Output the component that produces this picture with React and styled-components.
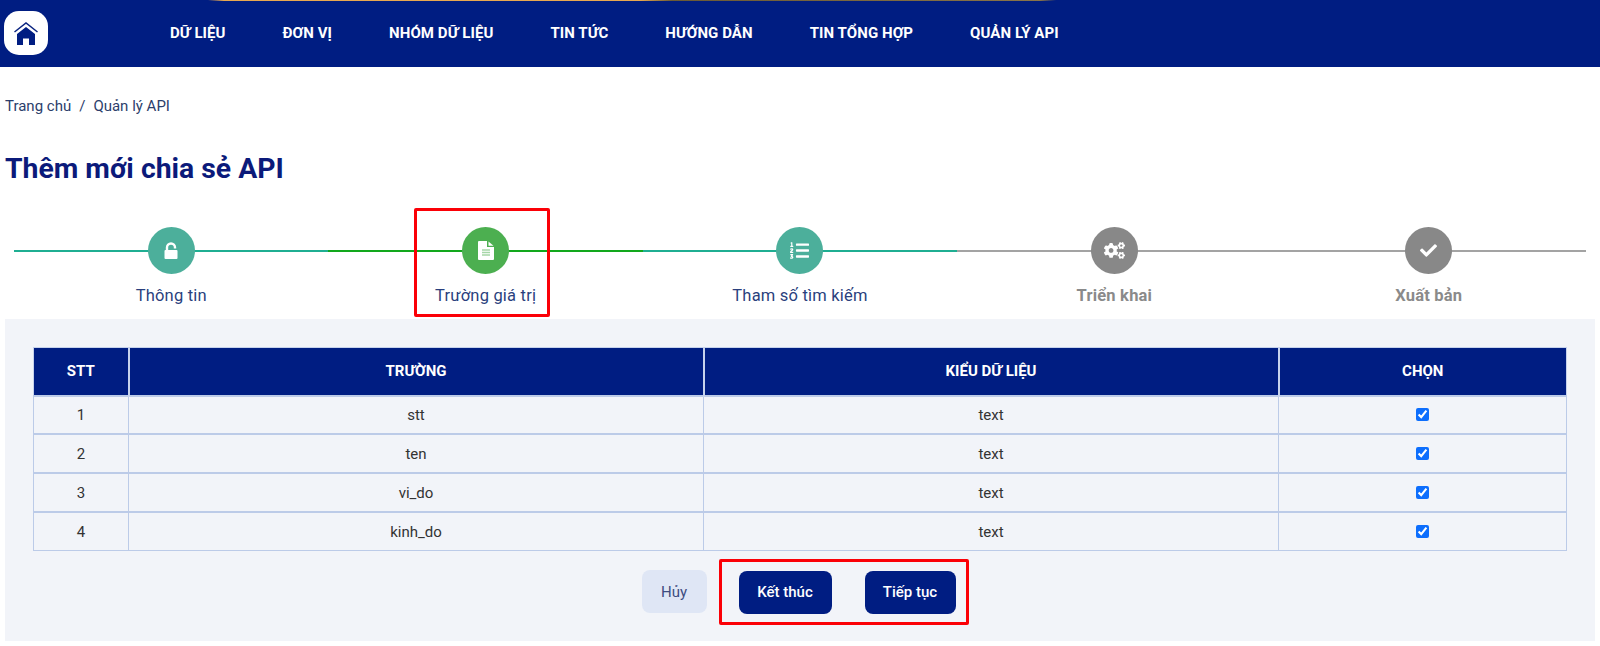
import React from "react";
import styled, { createGlobalStyle } from "styled-components";
import { FaListOl, FaCogs, FaCheck } from "react-icons/fa";

const Global = createGlobalStyle`
  html, body { margin: 0; padding: 0; background: #fff; }
  body { font-family: Roboto, "Liberation Sans", sans-serif; color: #333; overflow: hidden; }
  * { box-sizing: border-box; }
`;

const Page = styled.div`
  width: 1600px;
  height: 646px;
  overflow: hidden;
`;
const TopStrip = styled.div`
  height: 1px;
  background: linear-gradient(90deg, #001d82 0%, #001d82 13%, #e8a850 14%, #e8a850 40%, #6b5a35 42%, #8a7448 65%, #001d82 66%, #001d82 100%);
`;
const Nav = styled.nav`
  height: 66px;
  background: #001d82;
  display: flex;
  align-items: center;
  padding: 0 0 2px 4px;
`;
const LogoBox = styled.a`
  width: 44px;
  height: 44px;
  background: #fff;
  border-radius: 15px;
  display: flex;
  align-items: center;
  justify-content: center;
  margin-right: 122px;
`;
const NavList = styled.div`
  display: flex;
  gap: 57px;
`;
const NavItem = styled.a`
  color: #fff;
  font-size: 15px;
  font-weight: 700;
  letter-spacing: 0.08px;
  white-space: nowrap;
`;
const Breadcrumb = styled.div`
  display: flex;
  gap: 8px;
  padding: 31px 0 0 5px;
  font-size: 15px;
  line-height: 17px;
  color: #2c3e6b;
`;
const Title = styled.h1`
  margin: 37px 0 0 5px;
  font-size: 28.35px;
  line-height: 34px;
  font-weight: 700;
  color: #0b1a7a;
`;
const Stepper = styled.div`
  display: grid;
  grid-template-columns: repeat(5, 1fr);
  margin: 41px 14px 0;
  height: 92px;
`;
const Step = styled.div`
  position: relative;
  display: flex;
  flex-direction: column;
  align-items: center;
  &::before {
    content: "";
    position: absolute;
    left: 0;
    right: 0;
    top: 23px;
    height: 2px;
    background: ${(p) => p.$line};
  }
`;
const Circle = styled.div`
  position: relative;
  width: 47px;
  height: 47px;
  border-radius: 50%;
  background: ${(p) => p.$bg};
  color: #fff;
  display: flex;
  align-items: center;
  justify-content: center;
  font-size: ${(p) => p.$size || 17}px;
`;
const StepLabel = styled.div`
  margin-top: 11px;
  font-size: 16.5px;
  line-height: 22px;
  letter-spacing: 0.2px;
  font-weight: ${(p) => (p.$muted ? 700 : 400)};
  color: ${(p) => (p.$muted ? "#8a8a8a" : "#2a3f7d")};
  white-space: nowrap;
`;
const Highlight = styled.div`
  position: absolute;
  left: calc(50% - 3.5px);
  top: -19px;
  width: 136px;
  height: 109px;
  transform: translateX(-50%);
  border: 3px solid #fb0007;
  border-radius: 2px;
  pointer-events: none;
`;
const Panel = styled.section`
  margin: 0 5px;
  height: 322px;
  background: #f2f4f9;
  padding: 28px 29px 0 28px;
`;
const Table = styled.table`
  width: 1533px;
  table-layout: fixed;
  border-collapse: collapse;
  font-size: 15px;
`;
const Th = styled.th`
  height: 48px;
  background: #001d82;
  color: #fff;
  font-size: 15px;
  font-weight: 700;
  text-align: center;
  border: 1px solid #c6d2ec;
  border-left-width: 2px;
  border-right-width: 2px;
  &:first-child { border-left-width: 1px; }
  &:last-child { border-right-width: 1px; }
  width: ${(p) => p.$w}px;
`;
const Td = styled.td`
  height: 38.7px;
  text-align: center;
  color: #333;
  border: 1px solid #bccbe8;
  border-top-width: 2px;
  padding: 1px 0 0;
`;
const Check = styled.input`
  display: block;
  width: 13px;
  height: 13px;
  margin: -1px auto 0;
  accent-color: #0d6efd;
`;
const Actions = styled.div`
  display: flex;
  justify-content: center;
  align-items: center;
  gap: 12px;
  margin-top: 8px;
  padding-left: 11px;
`;
const Group = styled.div`
  display: flex;
  gap: 33px;
  padding: 9px 10px 8px 17px;
  border: 3px solid #fb0007;
  border-radius: 2px;
`;
const Button = styled.button`
  height: 43px;
  width: ${(p) => p.$w}px;
  border: none;
  border-radius: 8px;
  font-family: inherit;
  font-size: 15px;
  font-weight: ${(p) => (p.$ghost ? 400 : 500)};
  padding: 0;
  background: ${(p) => (p.$ghost ? "#dfe6f5" : "#001d82")};
  color: ${(p) => (p.$ghost ? "#3d4c80" : "#fff")};
`;

const HomeIcon = () => (
  <svg width="24" height="23" viewBox="0 0 24 23">
    <path d="M0.500 10 12 1l11.500 9" fill="none" stroke="#0b2480" strokeWidth="1.500" />
    <path d="M12 5 3 12v11h6v-6.500h6V23h6V12z" fill="#001d82" />
  </svg>
);
const UnlockIcon = () => (
  <svg width="14" height="17" viewBox="0 0 14 17">
    <path d="M3 9V5.500a4 4 0 0 1 8 0V6.500" fill="none" stroke="#fff" strokeWidth="2.400" />
    <rect x="0.500" y="8" width="13" height="9" rx="1" fill="#fff" />
  </svg>
);
const FileIcon = () => (
  <svg width="16" height="19" viewBox="0 0 16 19">
    <path d="M0 1a1 1 0 0 1 1-1h8v6h7v12a1 1 0 0 1-1 1H1a1 1 0 0 1-1-1z" fill="#fff" />
    <path d="M10.500 0.500 15.500 4.800H10.500z" fill="#fff" />
    <path d="M4 9h8M4 11.500h8M4 14h8" stroke="#a5d6a7" strokeWidth="1.300" />
  </svg>
);

const NAV = ["DỮ LIỆU", "ĐƠN VỊ", "NHÓM DỮ LIỆU", "TIN TỨC", "HƯỚNG DẪN", "TIN TỔNG HỢP", "QUẢN LÝ API"];
const STEPS = [
  { label: "Thông tin", Icon: UnlockIcon, bg: "#4caf9b", line: "#1fae92" },
  { label: "Trường giá trị", Icon: FileIcon, bg: "#4caf50", line: "#12a81c", boxed: true },
  { label: "Tham số tìm kiếm", Icon: FaListOl, bg: "#4caf9b", line: "#1fae92", size: 19 },
  { label: "Triển khai", Icon: FaCogs, bg: "#888888", line: "#a3a3a3", size: 21, muted: true },
  { label: "Xuất bản", Icon: FaCheck, bg: "#888888", line: "#a3a3a3", size: 17, muted: true },
];
const ROWS = ["stt", "ten", "vi_do", "kinh_do"];

export default function App() {
  return (
    <Page>
      <Global />
      <TopStrip />
      <Nav>
        <LogoBox><HomeIcon /></LogoBox>
        <NavList>
          {NAV.map((n) => <NavItem key={n}>{n}</NavItem>)}
        </NavList>
      </Nav>
      <Breadcrumb>
        <span>Trang chủ</span><span>/</span><span>Quản lý API</span>
      </Breadcrumb>
      <Title>Thêm mới chia sẻ API</Title>
      <Stepper>
        {STEPS.map(({ label, Icon, bg, line, size, boxed, muted }) => (
          <Step key={label} $line={line}>
            <Circle $bg={bg} $size={size}><Icon /></Circle>
            <StepLabel $muted={muted}>{label}</StepLabel>
            {boxed && <Highlight />}
          </Step>
        ))}
      </Stepper>
      <Panel>
        <Table>
          <thead>
            <tr>
              <Th $w={95}>STT</Th>
              <Th $w={575}>TRƯỜNG</Th>
              <Th $w={575}>KIỂU DỮ LIỆU</Th>
              <Th $w={288}>CHỌN</Th>
            </tr>
          </thead>
          <tbody>
            {ROWS.map((r, i) => (
              <tr key={r}>
                <Td>{i + 1}</Td>
                <Td>{r}</Td>
                <Td>text</Td>
                <Td><Check type="checkbox" defaultChecked /></Td>
              </tr>
            ))}
          </tbody>
        </Table>
        <Actions>
          <Button $ghost $w={65}>Hủy</Button>
          <Group>
            <Button $w={93}>Kết thúc</Button>
            <Button $w={91}>Tiếp tục</Button>
          </Group>
        </Actions>
      </Panel>
    </Page>
  );
}
